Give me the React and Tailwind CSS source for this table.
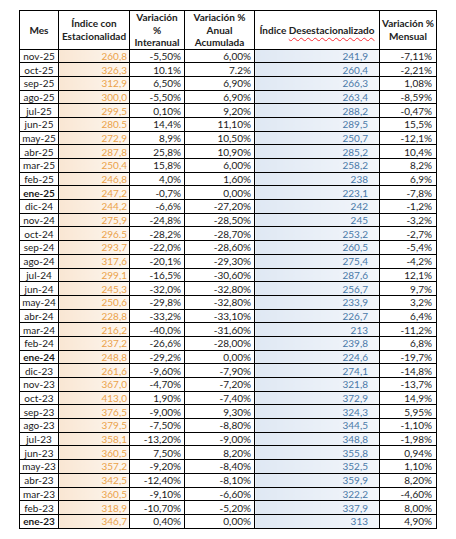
const rows = [
  ["nov-25", "260,8", "-5,50%", "6,00%", "241,9", "-7,11%"],
  ["oct-25", "326,3", "10.1%", "7.2%", "260,4", "-2,21%"],
  ["sep-25", "312,9", "6,50%", "6,90%", "266,3", "1,08%"],
  ["ago-25", "300,0", "-5,50%", "6,90%", "263,4", "-8,59%"],
  ["jul-25", "299,5", "0,10%", "9,20%", "288,2", "-0,47%"],
  ["jun-25", "280.5", "14,4%", "11,10%", "289,5", "15,5%"],
  ["may-25", "272,9", "8,9%", "10,50%", "250,7", "-12,1%"],
  ["abr-25", "287,8", "25,8%", "10,90%", "285,2", "10,4%"],
  ["mar-25", "250,4", "15,8%", "6,00%", "258,2", "8,2%"],
  ["feb-25", "246,8", "4,0%", "1,60%", "238", "6,9%"],
  ["ene-25", "247,2", "-0,7%", "0,00%", "223,1", "-7,8%", true],
  ["dic-24", "244,2", "-6,6%", "-27,20%", "242", "-1,2%"],
  ["nov-24", "275,9", "-24,8%", "-28,50%", "245", "-3,2%"],
  ["oct-24", "296.5", "-28,2%", "-28,70%", "253,2", "-2,7%"],
  ["sep-24", "293,7", "-22,0%", "-28,60%", "260,5", "-5,4%"],
  ["ago-24", "317,6", "-20,1%", "-29,30%", "275,4", "-4,2%"],
  ["jul-24", "299,1", "-16,5%", "-30,60%", "287,6", "12,1%"],
  ["jun-24", "245,3", "-32,0%", "-32,80%", "256,7", "9,7%"],
  ["may-24", "250,6", "-29,8%", "-32,80%", "233,9", "3,2%"],
  ["abr-24", "228,8", "-33,2%", "-33,10%", "226,7", "6,4%"],
  ["mar-24", "216,2", "-40,0%", "-31,60%", "213", "-11,2%"],
  ["feb-24", "237,2", "-26,6%", "-28,00%", "239,8", "6,8%"],
  ["ene-24", "248,8", "-29,2%", "0,00%", "224,6", "-19,7%", true],
  ["dic-23", "261,6", "-9,60%", "-7,90%", "274,1", "-14,8%"],
  ["nov-23", "367,0", "-4,70%", "-7,20%", "321,8", "-13,7%"],
  ["oct-23", "413,0", "1,90%", "-7,40%", "372,9", "14,9%"],
  ["sep-23", "376,5", "-9,00%", "9,30%", "324,3", "5,95%"],
  ["ago-23", "379,5", "-7,50%", "-8,80%", "344,5", "-1,10%"],
  ["jul-23", "358,1", "-13,20%", "-9,00%", "348,8", "-1,98%"],
  ["jun-23", "360,5", "7,50%", "8,20%", "355,8", "0,94%"],
  ["may-23", "357,2", "-9,20%", "-8,40%", "352,5", "1,10%"],
  ["abr-23", "342,5", "-12,40%", "-8,10%", "359,9", "8,20%"],
  ["mar-23", "360,5", "-9,10%", "-6,60%", "322,2", "-4,60%"],
  ["feb-23", "318,9", "-10,70%", "-5,20%", "337,9", "8,00%"],
  ["ene-23", "346,7", "0,40%", "0,00%", "313", "4,90%", true],
];

const App = () => {
  return (
    <div className="min-h-[539px] bg-white pt-[10px] pl-[19px] font-['Lato',sans-serif] text-[10px] text-[#1a1a1a]">
      <table className="table-fixed border-collapse w-[418px]">
        <colgroup>
          <col className="w-[39px]" />
          <col className="w-[71px]" />
          <col className="w-[55px]" />
          <col className="w-[70px]" />
          <col className="w-[125px]" />
          <col className="w-[57px]" />
        </colgroup>
        <thead>
          <tr className="h-[38px] font-bold text-center leading-[12.5px] text-[#222]">
            <th className="border border-black p-0">Mes</th>
            <th className="border border-black p-0">
              Índice con
              <br />
              Estacionalidad
            </th>
            <th className="border border-black p-0">
              Variación
              <br />%<br />
              Interanual
            </th>
            <th className="border border-black p-0">
              Variación %
              <br />
              Anual
              <br />
              Acumulada
            </th>
            <th className="border border-black p-0">
              Índice{" "}
              <span className="underline decoration-wavy decoration-red-500 decoration-1 underline-offset-[3px]">
                Desestacionalizado
              </span>
            </th>
            <th className="border border-black p-0">
              Variación %
              <br />
              Mensual
            </th>
          </tr>
        </thead>
        <tbody>
          {rows.map((r) => (
            <tr key={r[0]} className="h-[13.7px] leading-[12px]">
              <td
                className={`border border-black p-0 text-center ${r[6] ? "font-bold" : ""}`}
              >
                {r[0]}
              </td>
              <td className="border border-black p-0 pr-[2px] text-right text-[#eba24a] bg-gradient-to-r from-[#f9e6d3] to-[#fdf7f0]">
                {r[1]}
              </td>
              <td className="border border-black p-0 pr-[3px] text-right">{r[2]}</td>
              <td className="border border-black p-0 pr-[3px] text-right">{r[3]}</td>
              <td className="border border-black p-0 pr-[11px] text-right text-[#4a79a8] bg-gradient-to-r from-[#dfe8f3] to-[#f3f6fb]">
                {r[4]}
              </td>
              <td className="border border-black p-0 pr-[4px] text-right">{r[5]}</td>
            </tr>
          ))}
        </tbody>
      </table>
    </div>
  );
};

export default App;
